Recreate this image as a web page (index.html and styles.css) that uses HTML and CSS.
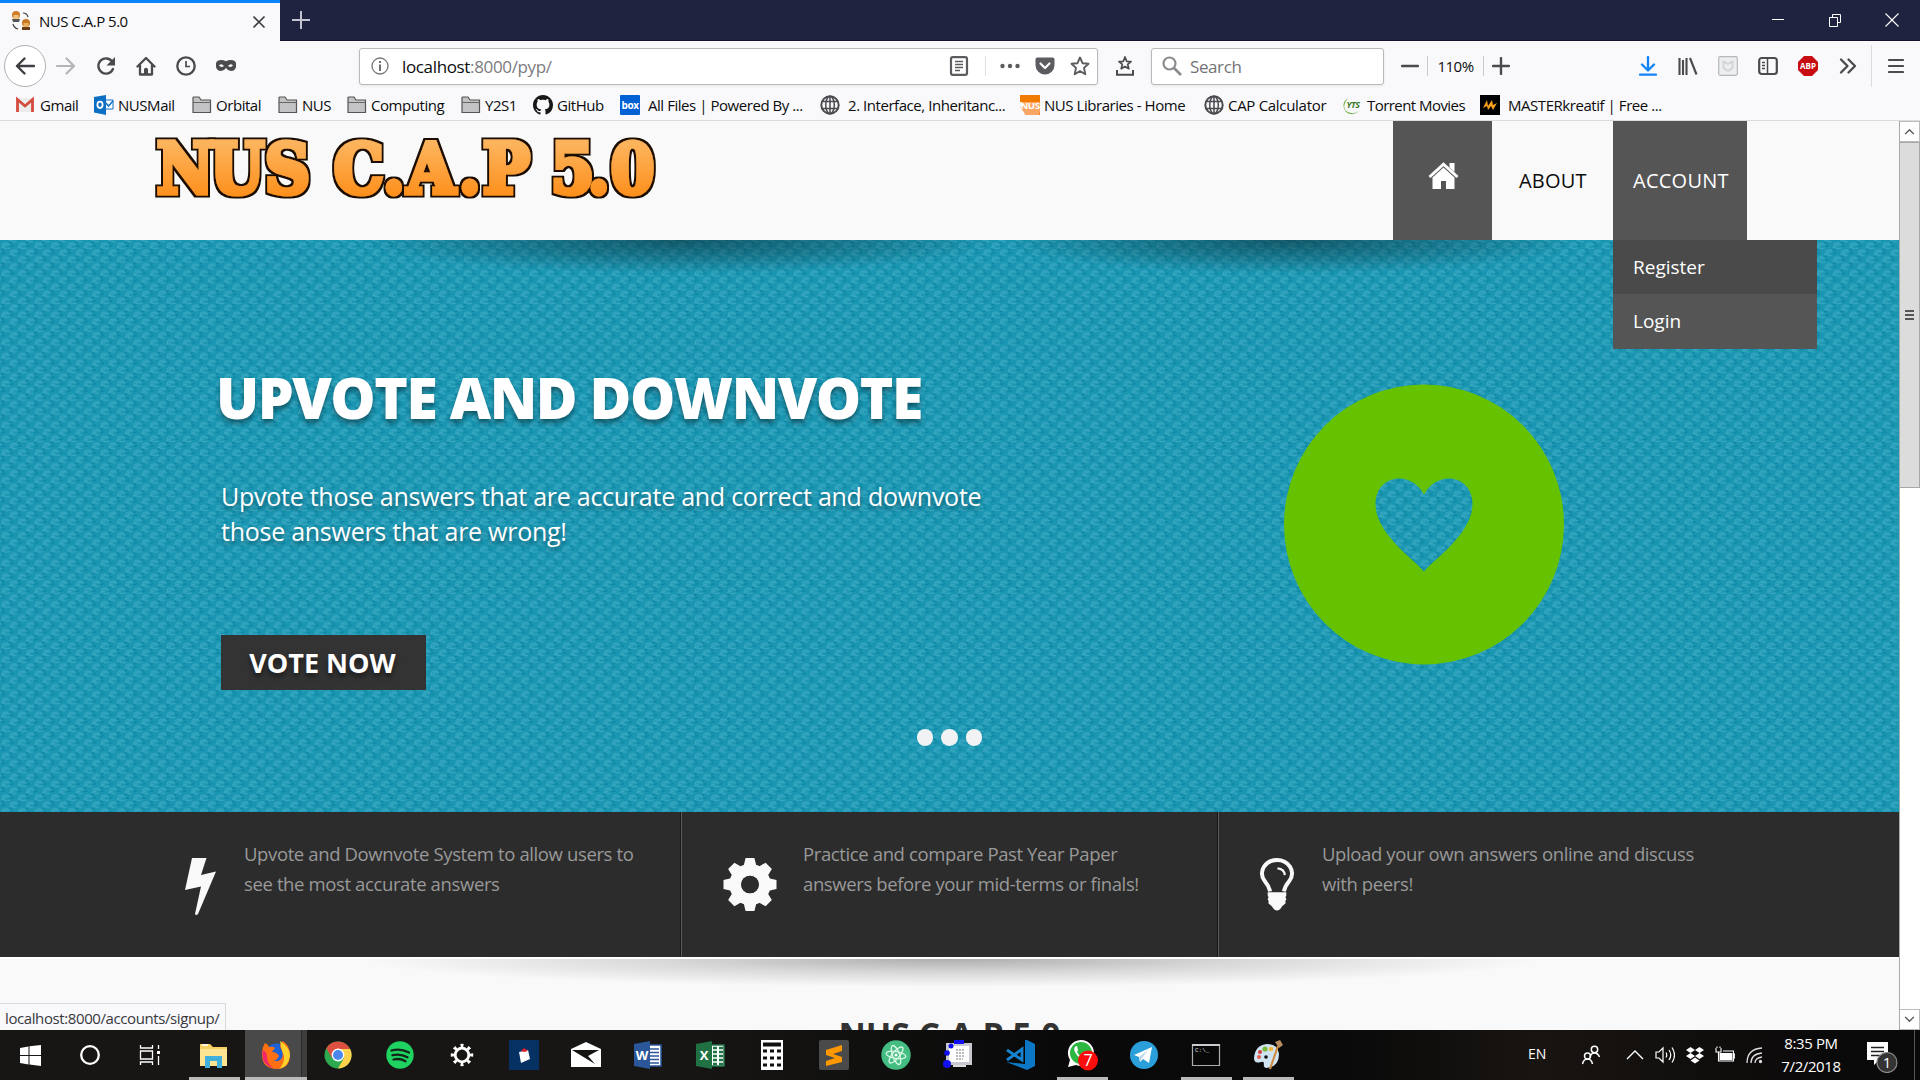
FILE: index.html
```html
<!DOCTYPE html>
<html lang="en">
<head>
<meta charset="utf-8">
<title>NUS C.A.P 5.0</title>
<link rel="stylesheet" href="styles.css">
</head>
<body>
<svg class="defs" aria-hidden="true">
  <symbol id="folder" viewBox="0 0 20 20"><path d="M1 17.500V3q0-1 1-1h5l2 3h9.500V17.500z" fill="#c3c3c5" stroke="#555" stroke-width="1.200"/><path d="M1 7.500h17.500" stroke="#666"/></symbol>
  <symbol id="globe" viewBox="0 0 20 20"><g fill="none" stroke="#4a4a4f" stroke-width="1.500"><circle cx="10" cy="10" r="8.700" stroke-width="2"/><ellipse cx="10" cy="10" rx="4.300" ry="8.700"/><path d="M10 1v18M2.500 6.500h15M2.500 13.500h15"/></g></symbol>
</svg>

<header class="titlebar">
  <div class="tab">
    <svg class="tab-icon" viewBox="0 0 20 20"><circle cx="5" cy="4" r="4" fill="#d07a2c"/><path d="M2.500 4h5v4h-5z" fill="#f1c27b"/><path d="M1 8h8l-1 3H2z" fill="#555"/><circle cx="15" cy="12" r="4" fill="#c97524"/><path d="M12.500 12h5v4h-5z" fill="#e8b063"/><path d="M11 16h8v3h-8z" fill="#6b3c18"/><path d="M12 2q4 0 5 4M2 13q1 4 5 5" fill="none" stroke="#444" stroke-width="1.200"/></svg>
    <span class="tab-title">NUS C.A.P 5.0</span>
    <svg class="tab-close" viewBox="0 0 14 14"><path d="M1.500 1.500l11 11M12.500 1.500l-11 11" stroke="#3d3d42" stroke-width="1.700"/></svg>
  </div>
  <svg class="newtab" viewBox="0 0 18 18"><path d="M9 0v18M0 9h18" stroke="#c4c5d0" stroke-width="2"/></svg>
  <div class="window-buttons">
    <svg viewBox="0 0 14 14"><path d="M1 6.500h12" stroke="#fff"/></svg>
    <svg viewBox="0 0 14 14"><path d="M1.500 4.500h8v9h-8zM4.500 4V1.500h8v8H10" fill="none" stroke="#fff"/></svg>
    <svg viewBox="0 0 14 14"><path d="M.5.500l13 13M13.500.500l-13 13" stroke="#fff" stroke-width="1.100"/></svg>
  </div>
</header>

<nav class="toolbar">
  <div class="nav-buttons">
    <span class="back"><svg viewBox="0 0 20 20"><path d="M19 10H2M9.500 2.500L2 10l7.500 7.500" fill="none" stroke="#3f3f44" stroke-width="2.400" stroke-linecap="round" stroke-linejoin="round"/></svg></span>
    <svg viewBox="0 0 20 20"><path d="M1 10h17M10.500 2.500L18 10l-7.500 7.500" fill="none" stroke="#b5b5b8" stroke-width="2.200" stroke-linecap="round" stroke-linejoin="round"/></svg>
    <svg viewBox="0 0 20 20"><path d="M16.500 6A7.600 7.600 0 1 0 17 13" fill="none" stroke="#4a4a4f" stroke-width="2.400" stroke-linecap="round"/><path d="M19 1v8.500h-8.500z" fill="#4a4a4f"/></svg>
    <svg viewBox="0 0 20 20"><path d="M1.500 10.500L10 2l8.500 8.500M4 9.500v9h12v-9" fill="none" stroke="#4a4a4f" stroke-width="2.300" stroke-linecap="round" stroke-linejoin="round"/><path d="M8 19v-6q2-2.500 4 0v6" fill="#4a4a4f"/></svg>
    <svg viewBox="0 0 20 20"><circle cx="10" cy="10" r="8.700" fill="none" stroke="#4a4a4f" stroke-width="2.300"/><path d="M10 5v5.500h4" fill="none" stroke="#4a4a4f" stroke-width="1.700"/></svg>
    <svg viewBox="0 0 20 20"><path d="M0 7q1-3 5-3 3 0 5 1.200Q12 4 15 4q4 0 5 3v4q-1 4-5 4-3 0-5-3-2 3-5 3-4 0-5-4zM3 9.500q2.500-2.500 5 .5-3 2-5-.5zm9 .5q2.500-3 5-.5-2 2.500-5 .5z" fill="#4a4a4f" fill-rule="evenodd"/></svg>
  </div>
  <div class="urlbar">
    <svg class="info" viewBox="0 0 18 18"><circle cx="9" cy="9" r="8" fill="none" stroke="#77777a" stroke-width="1.300"/><path d="M9 7.500V14M9 4v2" stroke="#666" stroke-width="1.900"/></svg>
    <span class="url"><b>localhost</b>:8000/pyp/</span>
    <div class="url-actions">
      <svg class="reader" viewBox="0 0 20 20"><rect x="2" y="1.200" width="16" height="17.600" rx="1.800" fill="none" stroke="#5c5c60" stroke-width="2.200"/><path d="M6 5.500h8M6 8.500h8M6 11.500h8M6 14.500h5" stroke="#5c5c60" stroke-width="1.300"/></svg>
      <svg viewBox="0 0 20 20"><g fill="#5c5c60"><circle cx="2.500" cy="10" r="2.200"/><circle cx="10" cy="10" r="2.200"/><circle cx="17.500" cy="10" r="2.200"/></g></svg>
      <svg viewBox="0 0 20 20"><path d="M2.500 1.500h15q2 0 2 2V9a9.500 9.500 0 0 1-19 0V3.500q0-2 2-2z" fill="#5c5c60"/><path d="M5.500 7.500L10 12l4.500-4.500" fill="none" stroke="#fff" stroke-width="2.200" stroke-linecap="round" stroke-linejoin="round"/></svg>
      <svg viewBox="0 0 20 20"><path d="M10 1.500l2.500 5.700 6 .6-4.500 4.100 1.300 6.300L10 15l-5.300 3.200L6 11.900 1.500 7.800l6-.6z" fill="none" stroke="#5c5c60" stroke-width="1.900" stroke-linejoin="round"/></svg>
    </div>
  </div>
  <svg class="bookmark-tray" viewBox="0 0 20 20"><path d="M10 1l1.700 4.300 4.300.3-3.300 2.800 1.100 4.300L10 10.400l-3.800 2.300 1.100-4.300L4 5.600l4.300-.3z" fill="none" stroke="#4a4a4f" stroke-width="1.700" stroke-linejoin="round"/><path d="M2 14v4.700h16V14" fill="none" stroke="#4a4a4f" stroke-width="2"/></svg>
  <div class="search">
    <svg viewBox="0 0 20 20"><circle cx="7.500" cy="7.500" r="6" fill="none" stroke="#8c8c90" stroke-width="2.200"/><path d="M12 12l7 7" stroke="#8c8c90" stroke-width="2.600"/></svg>
    <span>Search</span>
  </div>
  <div class="zoom">
    <svg viewBox="0 0 18 18"><path d="M1 9h16" stroke="#4a4a4f" stroke-width="2.400" stroke-linecap="round"/></svg>
    <span>110%</span>
    <svg viewBox="0 0 18 18"><path d="M1 9h16M9 1v16" stroke="#4a4a4f" stroke-width="2.400" stroke-linecap="round"/></svg>
  </div>
  <div class="extensions">
    <svg viewBox="0 0 20 20"><path d="M10 1v13M4 8.500l6 6 6-6M2 18.700h16" fill="none" stroke="#1283f7" stroke-width="2.300" stroke-linecap="round" stroke-linejoin="round"/></svg>
    <svg viewBox="0 0 20 20"><path d="M1.500 2v17M5 4v15M8.500 2v17M12 2l6.500 16.500" stroke="#4a4a4f" stroke-width="2.100"/></svg>
    <svg viewBox="0 0 20 20"><rect x=".7" y=".7" width="18.600" height="18.600" rx="1.500" fill="#eceef0" stroke="#b5b8bb" stroke-width="1.200"/><path d="M5.500 5.500L10 8l4.500-2.500v6.500L10 15l-4.500-3z" fill="none" stroke="#d0d3d6" stroke-width="1.800"/></svg>
    <svg viewBox="0 0 20 20"><rect x="1.200" y="2" width="17.600" height="16" rx="2.500" fill="none" stroke="#4a4a4f" stroke-width="2.200"/><path d="M9.500 2v16M4 6.500h3M4 9.500h3M4 12.500h3" stroke="#4a4a4f" stroke-width="1.500"/></svg>
    <svg viewBox="0 0 20 20"><path d="M6 0h8l6 6v8l-6 6H6l-6-6V6z" fill="#c70d12"/><text x="10" y="13.300" text-anchor="middle" textLength="16" lengthAdjust="spacingAndGlyphs" class="abp">ABP</text></svg>
    <svg viewBox="0 0 20 20"><path d="M3 3.500L9.500 10 3 16.500M10.500 3.500L17 10l-6.500 6.500" fill="none" stroke="#4a4a4f" stroke-width="2.300" stroke-linecap="round" stroke-linejoin="round"/></svg>
  </div>
  <div class="menu"><svg viewBox="0 0 16 16"><path d="M1 2h14M1 8h14M1 14h14" stroke="#4a4a4f" stroke-width="2.200" stroke-linecap="round"/></svg></div>
</nav>

<nav class="bookmarks">
  <a><svg viewBox="0 0 20 20"><path d="M0 3h18v14H0z" fill="#ececec"/><path d="M1.500 17V4.500L9 11l7.500-6.500V17" fill="none" stroke="#d54b3d" stroke-width="2.800"/></svg><span>Gmail</span></a>
  <a><svg viewBox="0 0 20 20"><path d="M10 5h9v9h-9z" fill="#fff" stroke="#1173c7"/><path d="M11 7l3.500 4L19 6" fill="none" stroke="#1173c7" stroke-width="1.500"/><path d="M0 2l12-2v20L0 17.500z" fill="#0d6fc4"/><ellipse cx="6" cy="9.800" rx="2.600" ry="3.200" fill="none" stroke="#fff" stroke-width="1.800"/></svg><span>NUSMail</span></a>
  <a><svg><use href="#folder"/></svg><span>Orbital</span></a>
  <a><svg><use href="#folder"/></svg><span>NUS</span></a>
  <a><svg><use href="#folder"/></svg><span>Computing</span></a>
  <a><svg><use href="#folder"/></svg><span>Y2S1</span></a>
  <a><svg viewBox="0 0 16 16"><path fill="#181616" d="M8 0C3.580 0 0 3.580 0 8c0 3.540 2.290 6.530 5.470 7.590.4.070.55-.17.55-.38 0-.19-.01-.82-.01-1.490-2.010.37-2.530-.49-2.690-.94-.09-.23-.48-.94-.82-1.130-.28-.15-.68-.52-.01-.53.63-.01 1.080.58 1.230.82.720 1.210 1.870.87 2.330.66.070-.52.280-.87.510-1.070-1.780-.2-3.640-.89-3.640-3.950 0-.87.310-1.590.82-2.150-.08-.2-.36-1.020.08-2.120 0 0 .67-.21 2.200.82.640-.18 1.320-.27 2-.27s1.360.09 2 .27c1.530-1.040 2.200-.82 2.200-.82.440 1.100.160 1.920.080 2.120.510.560.820 1.270.820 2.150 0 3.070-1.870 3.750-3.650 3.950.290.250.540.730.540 1.480 0 1.070-.01 1.930-.01 2.200 0 .210.150.460.550.380A8.010 8.010 0 0 0 16 8c0-4.420-3.580-8-8-8z"/></svg><span>GitHub</span></a>
  <a class="wide"><svg viewBox="0 0 20 20"><rect width="20" height="20" rx="1" fill="#0061d5"/><text x="10" y="14" text-anchor="middle" textLength="17" lengthAdjust="spacingAndGlyphs" class="boxlogo">box</text></svg><span>All Files | Powered By ...</span></a>
  <a class="wide"><svg><use href="#globe"/></svg><span>2. Interface, Inheritanc...</span></a>
  <a><svg viewBox="0 0 20 20"><path d="M0 0h20v20H5z" fill="#ffa766"/><path d="M0 0h20v7H0zM10 14h10v6z" fill="#ef7c00"/><path d="M0 12l6 8h12l2-3V8z" fill="#f9a566"/><text x="10" y="13.500" text-anchor="middle" textLength="19" lengthAdjust="spacingAndGlyphs" class="abp">NUS</text></svg><span>NUS Libraries - Home</span></a>
  <a><svg><use href="#globe"/></svg><span class="loose">CAP Calculator</span></a>
  <a><svg viewBox="0 0 20 20"><path d="M5 3Q-3 14 6 17.500q6 2 11-2Q10 22 3 17-3 9 5 3z" fill="#6cae3e"/><text x="10" y="13" text-anchor="middle" textLength="13" lengthAdjust="spacingAndGlyphs" class="yts">YTS</text></svg><span class="tight">Torrent Movies</span></a>
  <a class="wide"><svg viewBox="0 0 20 20"><path d="M0 0h20v20H0z"/><path d="M3 13l4-8 1 6 4-6 1 5 4-2-4 7-2-4-3 4-1-4z" fill="#f9a01b"/></svg><span>MASTERkreatif | Free ...</span></a>
</nav>

<div class="viewport">
  <main class="page">
    <div class="site-header">
      <svg class="logo" viewBox="0 0 520 100" role="img">
        <defs>
          <linearGradient id="orange" x1="0" y1="0" x2="0" y2="1"><stop offset=".2" stop-color="#fdb35c"/><stop offset=".85" stop-color="#fd8f1b"/></linearGradient>
          <filter id="outline" x="-5%" y="-10%" width="110%" height="120%"><feMorphology in="SourceAlpha" operator="dilate" radius="2" result="fat"/><feFlood flood-color="#1b0f05"/><feComposite in2="fat" operator="in"/><feMerge><feMergeNode/><feMergeNode in="SourceGraphic"/></feMerge></filter>
        </defs>
        <text class="logo-text" filter="url(#outline)" y="67" x="7 60 115 160 184 233 257 309 333 379 401 438 461">NUS C.A.P 5.0</text>
      </svg>
      <nav class="site-nav">
        <a class="nav-home"><svg viewBox="0 0 31 28"><path d="M4.500 15.500L15.500 5.500l11 10V27H18v-8h-5v8H4.500z" fill="#fff"/><path d="M1.500 15L15.500 2.200 29.500 15" fill="none" stroke="#fff" stroke-width="3"/><path d="M21.500 1h5v9l-5-4.500z" fill="#fff"/></svg></a>
        <a class="nav-about">ABOUT</a>
        <div class="nav-account">ACCOUNT
          <ul class="dropdown"><li class="active">Register</li><li>Login</li></ul>
        </div>
      </nav>
    </div>
    <section class="hero">
      <svg class="texture" width="1899" height="572">
        <defs><pattern id="swirl" width="16.500" height="13.800" patternUnits="userSpaceOnUse"><path d="M9 3.500l4-2M.5 10.800l4-2M9.500 6.500l4-1M1 13.500l4-1" stroke="#0b84a2" stroke-width="1.800" stroke-opacity=".8"/><g fill="none" stroke="#48b0c8" stroke-width="1" stroke-opacity=".75"><path id="curl" d="M1 7.500q2 0 3-1.500M9.500 5.500a3.600 2.900 0 1 0-3.600 3.200q2.500 0 4.500-1M7.800 5.700a1.700 1.300 0 1 0-1.700 1.400"/><use href="#curl" x="8.250" y="6.900"/><use href="#curl" x="-8.250" y="6.900"/><use href="#curl" x="8.250" y="-6.900"/></g></pattern></defs>
        <rect width="1899" height="572" fill="#1a96b2"/><rect width="1899" height="572" fill="url(#swirl)"/>
      </svg>
      <div class="hero-shade"></div>
      <div class="slide">
        <div class="slide-copy">
          <h1>UPVOTE AND DOWNVOTE</h1>
          <p>Upvote those answers that are accurate and correct and downvote<br>those answers that are wrong!</p>
          <a class="vote">VOTE NOW</a>
        </div>
        <svg class="badge" viewBox="0 0 280 280"><path fill-rule="evenodd" fill="#66c200" d="M140 0a140 140 0 1 1 0 280 140 140 0 1 1 0-280zM140 187C128 173 91.500 149 91.500 119 92 90 127 85 140 110 153 85 188 90 188.500 119 188.500 149 152 173 140 187z"/></svg>
      </div>
      <div class="dots"><i></i><i></i><i></i></div>
    </section>
    <section class="features">
      <div class="feature f1">
        <svg viewBox="0 0 31 57"><path d="M7 0h14.500L16 17l15-3.500L13 56q-2 2-3 0L16 28.500 0 32z" fill="#f9f9f9"/></svg>
        <p>Upvote and Downvote System to allow users to<br>see the most accurate answers</p>
      </div>
      <div class="feature f2">
        <svg viewBox="0 0 54 54"><circle cx="27" cy="27" r="15" fill="none" stroke="#f9f9f9" stroke-width="12"/><g fill="#f9f9f9"><path id="teeth" d="M20 10L22.500 0h9L34 10v34l-2.500 10h-9L20 44V36a11 11 0 0 0 14 0V18a11 11 0 0 0-14 0z"/><use href="#teeth" transform="rotate(45 27 27)"/><use href="#teeth" transform="rotate(90 27 27)"/><use href="#teeth" transform="rotate(135 27 27)"/></g><circle cx="27" cy="27" r="9" fill="#2c2c2c"/></svg>
        <p>Practice and compare Past Year Paper<br>answers before your mid-terms or finals!</p>
      </div>
      <div class="feature f3">
        <svg viewBox="0 0 36 54"><path d="M11 34Q10 29 5.500 23.500C-2 13 7 2 18 2s20 11 12.500 21.500Q26 29 25 34" fill="none" stroke="#f9f9f9" stroke-width="4"/><path d="M8.500 35h19v3l-.8 2 .8 2-1 2 .3 2-3.800 3.500Q21 53.500 18 53.500t-5-4L9.200 46l.3-2-1-2 .8-2-.8-2z" fill="#f9f9f9"/><path d="M18.500 10.500q7 .5 7.500 7" fill="none" stroke="#f9f9f9" stroke-width="2.200"/></svg>
        <p>Upload your own answers online and discuss<br>with peers!</p>
      </div>
    </section>
    <section class="intro"><h2>NUS C.A.P 5.0</h2></section>
    <div class="status">localhost:8000/accounts/signup/</div>
  </main>
  <aside class="scrollbar">
    <span class="arrow"><svg viewBox="0 0 12 8"><path d="M1 7l5-5 5 5" fill="none" stroke="#555" stroke-width="1.600"/></svg></span>
    <span class="thumb"><i></i><i></i><i></i></span>
    <span class="arrow down"><svg viewBox="0 0 12 8"><path d="M1 1l5 5 5-5" fill="none" stroke="#555" stroke-width="1.600"/></svg></span>
  </aside>
</div>

<footer class="taskbar">
  <div class="system">
    <span><svg width="21" height="21" viewBox="0 0 21 21"><path d="M0 3l8.500-1.500V10H0zM9.500 1.300L21 0v10H9.500zM0 11h8.500v8.500L0 18zM9.500 11H21v10L9.500 19.500z" fill="#fff"/></svg></span>
    <span><svg width="22" height="22" viewBox="0 0 22 22"><circle cx="11" cy="11" r="8.800" fill="none" stroke="#fff" stroke-width="2.300"/></svg></span>
    <span><svg width="22" height="22" viewBox="0 0 22 22"><path d="M1.500 1v3h12V1M1.500 21v-3h12v3M1.500 7h12v8h-12zM19.500 1v4M19.500 12v9" fill="none" stroke="#fff" stroke-width="1.300"/><path d="M18 7h3v3h-3z" fill="#fff"/></svg></span>
  </div>
  <div class="apps">
    <span class="open"><svg viewBox="0 0 30 30"><path d="M1 4h10l3 3h14v19H1z" fill="#f7cf62"/><path d="M3 4h6v2H3z" fill="#fff7dd"/><path d="M1 9h27v17H1z" fill="#fde492"/><path d="M6 28V16h17v12h-5v-7h-7v7z" fill="#42b0dc"/></svg></span>
    <span class="open current"><svg viewBox="0 0 30 30"><circle cx="15.500" cy="15" r="11.500" fill="#1c63d8"/><path d="M4 3q3 1 4 4 4-1 6 1l-3 4q5 0 7 4-2 5-6 4 6 3 9-2 2-5-2-11 0-4 3-6 7 5 7 14 0 14-14 14Q1 28 1 15 1 8 4 3z" fill="#ff7014"/><path d="M19 1q10 6 10 15-2 11-11 13 6-6 5-13-3-7-4-15z" fill="#ffd12b"/><path d="M2 10q-3 14 10 18-6-5-6-11 0-5-4-7z" fill="#f0286b"/></svg></span>
    <span><svg viewBox="0 0 30 30"><circle cx="15" cy="15" r="13.500" fill="#2da94f"/><path d="M15 1.500A13.500 13.500 0 0 0 3.300 8.200L9 18l6-9h12A13.500 13.500 0 0 0 15 1.500z" fill="#de4f41"/><path d="M27.200 9H15l6 9-6 10.500A13.500 13.500 0 0 0 27.200 9z" fill="#fdd14a"/><circle cx="15" cy="15" r="6.400" fill="#fff"/><circle cx="15" cy="15" r="5" fill="#4a88ee"/></svg></span>
    <span><svg viewBox="0 0 30 30"><circle cx="15" cy="15" r="13.700" fill="#1ed35f"/><path d="M6.500 10.500q9-2.500 17.500 2M7.500 15.200q8-2 15 2M8.500 19.500q6.500-1.500 12 1.700" fill="none" stroke="#14251a" stroke-width="2.300" stroke-linecap="round"/></svg></span>
    <span><svg viewBox="0 0 30 30"><g fill="none" stroke="#fff"><circle cx="15" cy="15" r="6.800" stroke-width="2.800"/><circle cx="15" cy="15" r="9.500" stroke-width="3.500" pathLength="80" stroke-dasharray="4 6" stroke-dashoffset="2"/></g></svg></span>
    <span><svg viewBox="0 0 30 30"><path d="M0 0h30v30H0z" fill="#063263"/><path d="M10 12l9-2 2 9-9 4z" fill="#fff"/><path d="M12 11l3-3 4 3-4 1z" fill="#e3202b"/></svg></span>
    <span><svg viewBox="0 0 30 30"><path d="M0 9L15 2l15 7v18H0z" fill="#fff"/><path d="M1 10h27L17 16l7 8z" fill="#151413"/></svg></span>
    <span><svg viewBox="0 0 30 30"><path d="M16 5h12v21H16z" fill="#fff" stroke="#2b579a" stroke-width="1.500"/><path d="M17 9h9M17 12.500h9M17 16h9M17 19.500h9M17 23h9" stroke="#2b579a" stroke-width="1.500"/><path d="M1 4l16-3v28L1 26z" fill="#2b579a"/><text x="9" y="20" text-anchor="middle" class="office">W</text></svg></span>
    <span><svg viewBox="0 0 30 30"><path d="M16 5h13v21H16z" fill="#fff" stroke="#207245" stroke-width="1.500"/><path d="M18 8h4M24 8h4M18 12h4M24 12h4M18 16h4M24 16h4M18 20h4M24 20h4M18 24h4M24 24h4" stroke="#207245" stroke-width="2.500"/><path d="M1 4l16-3v28L1 26z" fill="#207245"/><text x="9" y="20" text-anchor="middle" class="office">X</text></svg></span>
    <span><svg viewBox="0 0 30 30"><path d="M4 0h22v30H4z" fill="#fff"/><path d="M6 2.500h18v4H6z" fill="#111"/><path d="M6 11h4M13 11h4M20 11h4M6 18h4M13 18h4M20 18h4M6 25h4M13 25h4M20 25h4" stroke="#111" stroke-width="3"/></svg></span>
    <span><svg viewBox="0 0 30 30"><rect width="30" height="30" rx="2" fill="#4a4a4a"/><path d="M7 10l16-5v6l-9 3 9 3v5L7 26v-5l9-3-9-3z" fill="#ff9800"/></svg></span>
    <span><svg viewBox="0 0 30 30"><circle cx="15" cy="15" r="14.700" fill="#45bd82"/><g fill="none" stroke="#d9f8e5" stroke-width="1.300"><ellipse cx="15" cy="15" rx="3.500" ry="10" transform="rotate(-20 15 15)"/><ellipse cx="15" cy="15" rx="3.500" ry="10" transform="rotate(40 15 15)"/><ellipse cx="15" cy="15" rx="3.500" ry="10" transform="rotate(100 15 15)"/></g><circle cx="15" cy="15" r="1.500" fill="#fff"/></svg></span>
    <span><svg viewBox="0 0 30 30"><path d="M3 3h26v22H3z" fill="#c9c9d2"/><path d="M6 6h20v16H6z" fill="#fff"/><path d="M13 10h9M13 13h9M13 16h9M13 19h7" stroke="#777" stroke-dasharray="2 1"/><path d="M10 26h13" stroke="#ddd" stroke-width="2"/><g fill="#1010f0"><circle cx="4" cy="24" r="4"/><circle cx="4" cy="13" r="2.800"/><circle cx="8" cy="6" r="2.500"/><path d="M11 0h10v4H11z"/></g></svg></span>
    <span><svg viewBox="0 0 30 30"><path d="M22 0l8 4v22l-8 4L1 22l19 2V0z" fill="#0b77c5"/><path d="M2 10l15 10V9L2 20" fill="none" stroke="#1684d0" stroke-width="2.800"/></svg></span>
    <span class="open"><svg class="chat" viewBox="0 0 32 32"><path d="M2 28l2-7A13 13 0 1 1 10 26z" fill="#fff"/><circle cx="15" cy="14" r="11" fill="#2cb742"/><path d="M10 7q-3 2-1 6 3 6 9 8 3 0 4-3l-4-2-2 2q-3-1-5-5l1-2-1-4z" fill="#fff"/><circle cx="22" cy="21.500" r="10" fill="#f90d0d"/><text x="22" y="27" text-anchor="middle" class="count">7</text></svg></span>
    <span><svg viewBox="0 0 30 30"><circle cx="15" cy="15" r="14" fill="#2a9fd9"/><path d="M5 15l18-8-3 16-6-4-3 3-1-5z" fill="#fff"/><path d="M10 17l9-7-6 8-2 4z" fill="#b9d8e8"/></svg></span>
    <span class="open"><svg viewBox="0 0 30 30"><path d="M1.500 4.500h27v21h-27z" fill="#080808" stroke="#a8adb2" stroke-width="1.200"/><path d="M1 5h28" stroke="#c8ccd0" stroke-width="2"/><text x="4" y="12" class="cmd">C:\_</text></svg></span>
    <span class="open"><svg viewBox="0 0 30 30"><path d="M14 4q11 0 12 10 0 13-13 14-3-1-2-4 0-3-3-2-7 2-7-4Q2 5 14 4z" fill="#cfe3f1"/><circle cx="12" cy="9" r="2.600" fill="#79b83c"/><circle cx="7" cy="12" r="2" fill="#d43d3d"/><circle cx="6" cy="17" r="2" fill="#e85b4c"/><circle cx="18" cy="9" r="2.300" fill="#f5b93b"/><circle cx="13" cy="17" r="1.800" fill="#111"/><path d="M25 6L17 29" stroke="#d08a42" stroke-width="2.200"/><path d="M22 2l5-2 3 5-4 3z" fill="#b98d62"/></svg></span>
  </div>
  <div class="tray">
    <span class="lang">EN</span>
    <svg class="people" viewBox="0 0 20 20"><g fill="none" stroke="#fff" stroke-width="1.500"><circle cx="13.500" cy="4.500" r="3.200"/><path d="M9 12q1-4 4.500-4t5 4"/><circle cx="6.500" cy="11" r="3"/><path d="M1.500 19q1-5 5-5t5 5"/></g></svg>
    <svg viewBox="0 0 20 20"><path d="M2 14l8-8 8 8" fill="none" stroke="#fff" stroke-width="1.400"/></svg>
    <svg viewBox="0 0 20 20"><path d="M1 7h3l4-4v14l-4-4H1zM11 7.500q1.500 2.500 0 5M14 5q3.500 5 0 10M17 2.500q5 7.500 0 15" fill="none" stroke="#fff" stroke-width="1.200"/></svg>
    <svg viewBox="0 0 20 20"><path d="M5.500 2L10 5 5.500 8 1 5zM14.500 2L19 5l-4.500 3L10 5zM5.500 8l4.500 3-4.500 3L1 11zM14.500 8l4.500 3-4.500 3L10 11zM10 12.500l4.500 3L10 18.500l-4.500-3z" fill="#fff"/></svg>
    <svg viewBox="0 0 20 20"><path d="M4.500 8h13v7h-13z" fill="#fff"/><path d="M8 6h10.500v10H3.500v-5M18.500 9h1.200v4h-1.200M1 3v4h5V3M3.500 7v4M2 1.500V3M5 1.500V3" fill="none" stroke="#fff" stroke-width="1.100"/></svg>
    <svg viewBox="0 0 20 20"><g fill="none" stroke="#ddd" stroke-width="1.300"><path d="M2 18Q2 4 17 3M6 18q0-9 11-10M10 18q0-5 7-6"/><circle cx="15.500" cy="16.500" r="1" fill="#ddd"/></g></svg>
    <div class="clock">8:35 PM<br>7/2/2018</div>
    <svg class="notify" viewBox="0 0 32 32"><path d="M1 1h21v18H13l-5 5v-5H1z" fill="#fff"/><path d="M5 6.500h13M5 10.500h13M5 14.500h9" stroke="#222" stroke-width="1.500"/><circle cx="21" cy="21.500" r="10" fill="#343434" stroke="#8b8b8b" stroke-width="1.200"/><text x="21" y="27" text-anchor="middle" class="badge-count">1</text></svg>
  </div>
  <div class="peek"></div>
</footer>
</body>
</html>
```
FILE: styles.css
```css
* { box-sizing: border-box; }
body { margin: 0; width: 1920px; height: 1080px; overflow: hidden; display: flex; flex-direction: column; font-family: "Open Sans", "Noto Sans", sans-serif; color: #0c0c0d; }
svg { display: block; flex: none; }
.defs { position: absolute; width: 0; height: 0; }

/* browser chrome */
.titlebar { height: 41px; flex: none; display: flex; align-items: center; background: #202340; border-bottom: 1px solid #11142c; }
.tab { width: 280px; height: 41px; background: #f9f9fb; border-top: 3px solid #0a84ff; display: flex; align-items: center; padding: 0 14px 2px 11px; margin-bottom: -1px; }
.tab-icon { width: 20px; height: 20px; }
.tab-title { margin-left: 8px; font-size: 15px; letter-spacing: -.5px; flex: 1; }
.tab-close { width: 14px; height: 14px; margin-top: 2px; }
.newtab { width: 18px; height: 18px; margin-left: 12px; }
.window-buttons { margin-left: auto; display: flex; gap: 43px; padding-right: 21px; }
.window-buttons svg { width: 14px; height: 14px; }
.toolbar { height: 50px; flex: none; background: #f9f9fb; display: flex; align-items: center; }
.nav-buttons { display: flex; align-items: center; width: 359px; gap: 20px; padding-left: 4px; }
.nav-buttons svg { width: 20px; height: 20px; }
.back { width: 42px; height: 42px; margin-right: -10px; border: 1px solid #b1b1b5; border-radius: 50%; background: #fff; display: grid; place-items: center; }
.urlbar, .search { height: 37px; background: #fff; border: 1px solid #b9b9bc; border-radius: 3px; display: flex; align-items: center; box-shadow: 0 1px 3px rgba(0,0,0,.08); }
.urlbar { width: 739px; padding: 0 7px 0 11px; }
.info { width: 18px; height: 18px; }
.url { margin-left: 13px; font-size: 17px; letter-spacing: -.35px; color: #7b7b7e; }
.url b { font-weight: 400; color: #0c0c0d; }
.url-actions { margin-left: auto; display: flex; gap: 15px; align-items: center; }
.url-actions svg { width: 20px; height: 20px; }
.url-actions .reader { margin-right: 16px; box-shadow: 16px 0 #fff, 17px 0 #e0e0e2; }
.bookmark-tray { width: 20px; height: 20px; margin: 0 16px 0 17px; }
.search { width: 233px; padding-left: 10px; gap: 8px; font-size: 17px; letter-spacing: -.4px; color: #737376; }
.search svg { width: 20px; height: 20px; }
.zoom { display: flex; align-items: center; margin-left: 17px; gap: 8px; font-size: 15px; letter-spacing: -.5px; }
.zoom svg { width: 18px; height: 18px; }
.zoom span { width: 57px; text-align: center; border: solid #c9c9cc; border-width: 0 1px; line-height: 20px; }
.extensions { display: flex; gap: 20px; margin-left: auto; }
.extensions svg { width: 20px; height: 20px; }
.menu { height: 42px; margin-left: 13px; padding: 0 16px; border-left: 1px solid #dcdcde; display: flex; align-items: center; }
.menu svg { width: 16px; height: 16px; }
.abp { font: 700 9px "Open Sans", sans-serif; fill: #fff; }
.boxlogo { font: 700 10px "Open Sans", sans-serif; fill: #fff; }
.yts { font: italic 700 8px "Open Sans", sans-serif; fill: #3d7a2b; }
.bookmarks { height: 30px; flex: none; background: #f9f9fb; border-bottom: 1px solid #dcdcde; padding: 0 0 2px 16px; display: grid; grid-template-columns: 78px 98px 86px 69px 114px 72px 87px 200px 200px 184px 139px 137px 1fr; align-items: center; }
.bookmarks a { display: flex; align-items: center; gap: 4px; font-size: 15px; letter-spacing: -.45px; white-space: nowrap; }
.bookmarks a.wide { gap: 8px; }
.bookmarks svg { width: 20px; height: 20px; }
.bookmarks span { padding-top: 1px; }
.bookmarks .loose { letter-spacing: -.3px; }
.bookmarks .tight { letter-spacing: -.55px; }

/* page */
.viewport { height: 909px; flex: none; display: flex; }
.page { width: 1899px; position: relative; overflow: hidden; background: #f9f9f9; }
.site-header { height: 119px; display: flex; justify-content: space-between; }
.logo { width: 520px; height: 100px; margin-left: 150px; margin-top: 5px; }
.logo-text { font: 700 69px "DejaVu Serif Condensed", "DejaVu Serif", serif; font-stretch: condensed; fill: url(#orange); stroke: url(#orange); stroke-width: 5; }
.site-nav { display: flex; width: 506px; font-size: 20px; line-height: 119px; }
.nav-home { width: 99px; background: #555; display: grid; justify-content: center; padding: 41px 2px 0 4px; }
.nav-home svg { width: 31px; height: 28px; }
.nav-about { width: 121px; padding-left: 27px; letter-spacing: .2px; }
.nav-account { width: 134px; padding-left: 20px; background: #555; color: #fff; position: relative; letter-spacing: .25px; }
.dropdown { position: absolute; z-index: 2; left: 0; top: 119px; width: 204px; margin: 0; padding: 0; list-style: none; background: #555; font-size: 19px; line-height: 55px; letter-spacing: 0; }
.dropdown li { padding-left: 20px; height: 55px; }
.dropdown .active { background: #4a4a4a; height: 54px; line-height: 54px; }
.hero { height: 572px; position: relative; color: #fff; }
.texture, .hero-shade { position: absolute; left: 0; top: 0; }
.hero-shade { width: 100%; height: 40px; background: radial-gradient(ellipse 320px 34px at 680px 0, rgba(10,50,60,.62), rgba(10,50,60,.3) 55%, transparent), radial-gradient(ellipse 290px 34px at 1290px 0, rgba(10,50,60,.62), rgba(10,50,60,.3) 55%, transparent); }
.slide { position: relative; display: flex; height: 485px; padding: 144px 335px 0 216px; justify-content: space-between; }
h1 { margin: -26px 0 0; font-size: 57px; font-weight: 800; line-height: 78px; letter-spacing: -1.450px; white-space: nowrap; text-shadow: 0 4px 5px rgba(0,0,0,.4); }
.slide p { margin: 43px 0 0 5px; font-size: 25px; line-height: 35px; letter-spacing: -.26px; white-space: nowrap; text-shadow: 0 3px 5px rgba(0,0,0,.4); }
.vote { display: block; width: 205px; height: 55px; margin: 86px 0 0 5px; padding-right: 2px; background: #333; text-align: center; font-size: 27px; font-weight: 700; line-height: 55px; text-shadow: 0 4px 5px rgba(0,0,0,.5); }
.badge { width: 280px; height: 281px; }
.dots { position: relative; display: flex; justify-content: center; gap: 8px; padding-top: 4px; }
.dots i { width: 16.500px; height: 16.500px; border-radius: 50%; background: #f0f2f3; }
.features { height: 145px; background: #2c2c2c; display: grid; grid-template-columns: 681px 537px 1fr; }
.feature { display: flex; border-left: 1px solid #5a5a5a; box-shadow: -1px 0 #191919; }
.feature p { margin: 27px 0 0; font-size: 18.500px; line-height: 30px; letter-spacing: -.38px; color: #999; white-space: nowrap; }
.feature svg { margin-top: 46px; }
.f1 { border: 0; padding-left: 185px; gap: 28px; }
.f1 svg { width: 31px; height: 57px; }
.f2 { padding-left: 41px; gap: 26px; }
.f2 svg { width: 54px; height: 53px; }
.f3 { padding-left: 40px; gap: 27px; }
.f3 svg { width: 36px; height: 53px; }
.intro { border-top: 2px solid #fff; background: radial-gradient(ellipse 590px 28px at 950px 0, rgba(0,0,0,.3), rgba(0,0,0,.13) 50%, transparent) no-repeat; height: 160px; }
h2 { margin: 51px 0 0; text-align: center; font-size: 33.700px; font-weight: 700; line-height: 48px; color: #333; }
.status { position: absolute; left: 0; bottom: 0; height: 27px; width: 226px; padding-left: 5px; background: #f9f9fb; border: solid #d8d8da; border-width: 1px 1px 0 0; font-size: 15px; line-height: 28px; letter-spacing: -.4px; color: #38383d; white-space: nowrap; }
.scrollbar { width: 21px; background: #fff; border-left: 1px solid #aaa; display: flex; flex-direction: column; }
.arrow { height: 21px; border: 1px solid #bbb; border-left: 0; display: grid; place-items: center; }
.arrow svg { width: 11px; height: 7px; }
.thumb { height: 346px; background: #dcdcdc; border: 1px solid #a8a8a8; border-left: 0; display: flex; flex-direction: column; align-items: center; justify-content: center; gap: 2px; }
.thumb i { width: 9px; height: 2px; background: #555; }
.down { margin-top: auto; }

/* taskbar */
.taskbar { height: 50px; flex: none; background: linear-gradient(90deg, #171614, #171614 35%, #090909 55%, #0a0a0a 70%, #181411 80%, #0b0a0a 95%); display: flex; }
.system, .apps { display: flex; }
.system span, .apps span { display: grid; place-items: center; }
.system { width: 183px; }
.system span { width: 60px; }
.apps span { width: 62px; height: 50px; position: relative; }
.apps svg { width: 30px; height: 30px; }
.apps .chat { width: 32px; height: 32px; }
.apps .open::after { content: ""; position: absolute; bottom: 0; left: 6px; width: 51px; height: 3px; background: #b9b9b9; }
.apps .current { background: linear-gradient(90deg, #494949 56px, #292929 56px, #292929 57px, #3e3e3e 57px); }
.apps .current::after { left: 0; width: 62px; }
.office { font: 700 13px "Open Sans", sans-serif; fill: #fff; }
.count { font: 16px "Open Sans", sans-serif; fill: #fff; }
.cmd { font: 6px "Liberation Mono", monospace; fill: #ddd; }
.tray { flex: 1; display: flex; align-items: center; padding-left: 229px; color: #fff; gap: 10px; }
.tray svg { width: 20px; height: 20px; }
.lang { font-size: 14px; width: 32px; margin-top: -3px; letter-spacing: -.1px; }
.tray .people { margin: 0 14px 0 11px; }
.clock { width: 92px; margin: 0 0 0 -10px; text-align: center; font-size: 15px; line-height: 23px; letter-spacing: -.4px; }
.tray .notify { width: 32px; height: 32px; margin: 4px 0 0 -1px; }
.badge-count { font: 15px "Open Sans", sans-serif; fill: #fff; }
.peek { width: 6px; border-left: 1px solid #555; }
```
